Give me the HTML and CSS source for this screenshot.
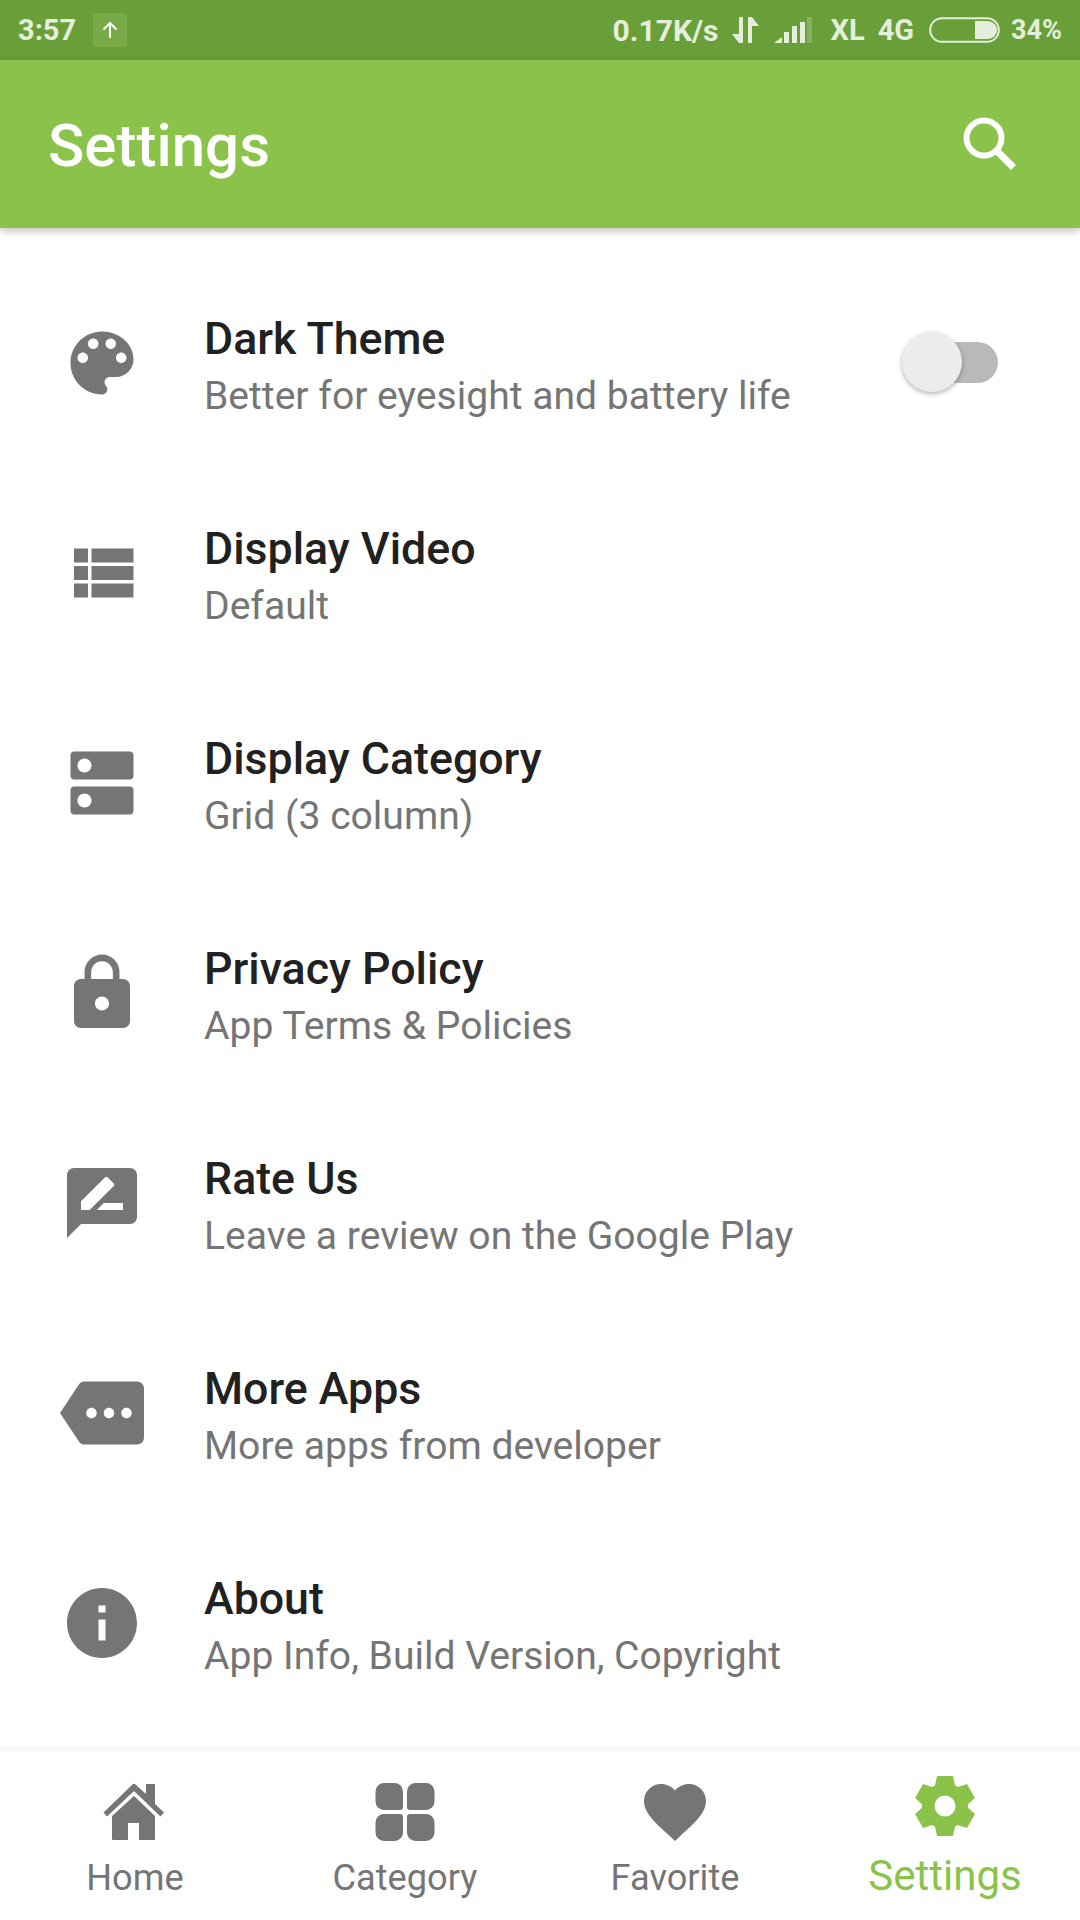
FILE: index.html
```html
<!DOCTYPE html>
<html lang="en">
<head>
  <meta charset="UTF-8">
  <meta name="viewport" content="width=device-width, initial-scale=1.0">
  <title>Settings</title>
  <link rel="stylesheet" href="styles.css">
</head>
<body>
  <!-- Status bar -->
  <div class="status-bar">
    <span class="status-time">3:57</span>
    <span class="status-badge">
      <svg width="20" height="20" viewBox="0 0 20 20"><path d="M10 18V3M3.5 9.5L10 3l6.500 6.500" fill="none" stroke="#fff" stroke-width="2"/></svg>
    </span>
    <div class="status-right">
      <span class="status-speed">0.17K/s</span>
      <svg class="status-data" width="28" height="26" viewBox="0 0 28 26"><path d="M7 0h4v26H7L0 17h7zM16 0h4l7 9h-7v17h-4z" fill="#e4eedb"/></svg>
      <svg class="status-signal" width="38" height="26" viewBox="0 0 38 26"><path d="M0 26l8-6v6zM10 15h5v11h-5zM18 9h5v17h-5zM26 5h5v21h-5z" fill="#e4eedb"/><rect x="33" y="0" width="5" height="26" fill="#e4eedb" opacity=".25"/></svg>
      <span class="status-carrier">XL</span>
      <span class="status-net">4G</span>
      <svg class="status-battery" width="71" height="26" viewBox="0 0 71 26"><rect x="1.200" y="1.200" width="68.600" height="23.600" rx="11.800" fill="none" stroke="#e4eedb" stroke-width="2"/><path d="M46 4h13a9 9 0 0 1 0 18H46z" fill="#e4eedb"/></svg>
      <span class="status-battery-text">34%</span>
    </div>
  </div>

  <!-- App bar -->
  <header class="app-bar">
    <h1>Settings</h1>
    <svg class="search-icon" width="56" height="56" viewBox="0 0 56 56"><circle cx="22" cy="22" r="17.500" fill="none" stroke="#fff" stroke-width="6"/><path d="M34 34l17.500 17.500" stroke="#fff" stroke-width="7"/></svg>
  </header>

  <!-- Settings list -->
  <main class="settings-list">
    <div class="row">
      <svg class="row-icon" viewBox="0 0 24 24"><path d="M12 3c-4.97 0-9 4.03-9 9s4.030 9 9 9c.83 0 1.500-.67 1.500-1.500 0-.39-.15-.74-.39-1.010-.23-.26-.38-.61-.38-.99 0-.83.67-1.500 1.500-1.500H16c2.760 0 5-2.240 5-5 0-4.420-4.030-8-9-8zm-5.500 9c-.83 0-1.500-.67-1.500-1.500S5.670 9 6.500 9 8 9.670 8 10.500 7.330 12 6.500 12zm3-4C8.670 8 8 7.330 8 6.500S8.670 5 9.500 5s1.500.67 1.500 1.500S10.330 8 9.500 8zm5 0c-.83 0-1.500-.67-1.500-1.500S13.670 5 14.500 5s1.500.67 1.500 1.500S15.330 8 14.500 8zm3 4c-.83 0-1.500-.67-1.500-1.500S16.670 9 17.500 9s1.500.67 1.500 1.500-.67 1.500-1.500 1.500z"/></svg>
      <div class="row-text">
        <div class="row-title">Dark Theme</div>
        <div class="row-sub">Better for eyesight and battery life</div>
      </div>
      <div class="toggle"><span class="toggle-thumb"></span></div>
    </div>
    <div class="row">
      <svg class="row-icon" viewBox="0 0 24 24"><path d="M4 14h4v-4H4v4zm0 5h4v-4H4v4zM4 9h4V5H4v4zm5 5h12v-4H9v4zm0 5h12v-4H9v4zM9 5v4h12V5H9z"/></svg>
      <div class="row-text">
        <div class="row-title">Display Video</div>
        <div class="row-sub">Default</div>
      </div>
    </div>
    <div class="row">
      <svg class="row-icon" viewBox="0 0 24 24"><path d="M20 13H4c-.55 0-1 .45-1 1v6c0 .55.45 1 1 1h16c.55 0 1-.45 1-1v-6c0-.55-.45-1-1-1zM7 19c-1.100 0-2-.9-2-2s.9-2 2-2 2 .9 2 2-.9 2-2 2zM20 3H4c-.55 0-1 .45-1 1v6c0 .55.45 1 1 1h16c.55 0 1-.45 1-1V4c0-.55-.45-1-1-1zM7 9c-1.100 0-2-.9-2-2s.9-2 2-2 2 .9 2 2-.9 2-2 2z"/></svg>
      <div class="row-text">
        <div class="row-title">Display Category</div>
        <div class="row-sub">Grid (3 column)</div>
      </div>
    </div>
    <div class="row">
      <svg class="row-icon" viewBox="0 0 24 24"><path d="M18 8h-1V6c0-2.760-2.240-5-5-5S7 3.240 7 6v2H6c-1.100 0-2 .9-2 2v10c0 1.100.9 2 2 2h12c1.100 0 2-.9 2-2V10c0-1.100-.9-2-2-2zm-6 9c-1.100 0-2-.9-2-2s.9-2 2-2 2 .9 2 2-.9 2-2 2zm3.100-9H8.900V6c0-1.710 1.390-3.100 3.100-3.100 1.710 0 3.100 1.390 3.100 3.100v2z"/></svg>
      <div class="row-text">
        <div class="row-title">Privacy Policy</div>
        <div class="row-sub">App Terms &amp; Policies</div>
      </div>
    </div>
    <div class="row">
      <svg class="row-icon" viewBox="0 0 24 24"><path d="M20 2H4c-1.100 0-1.990.9-1.990 2L2 22l4-4h14c1.100 0 2-.9 2-2V4c0-1.100-.9-2-2-2zM6 14v-2.470l6.880-6.880c.2-.2.51-.2.71 0l1.770 1.770c.2.2.2.51 0 .71L8.470 14H6zm12 0h-7.500l2-2H18v2z"/></svg>
      <div class="row-text">
        <div class="row-title">Rate Us</div>
        <div class="row-sub">Leave a review on the Google Play</div>
      </div>
    </div>
    <div class="row">
      <svg class="row-icon" viewBox="0 0 24 24"><path d="M22 3H7c-.69 0-1.230.35-1.590.88L0 12l5.410 8.110c.36.53.9.89 1.590.89h15c1.100 0 2-.9 2-2V5c0-1.100-.9-2-2-2zM9 13.500c-.83 0-1.500-.67-1.500-1.500s.67-1.500 1.500-1.500 1.500.67 1.500 1.500-.67 1.500-1.500 1.500zm5 0c-.83 0-1.500-.67-1.500-1.500s.67-1.500 1.500-1.500 1.500.67 1.500 1.500-.67 1.500-1.500 1.500zm5 0c-.83 0-1.500-.67-1.500-1.500s.67-1.500 1.500-1.500 1.500.67 1.500 1.500-.67 1.500-1.500 1.500z"/></svg>
      <div class="row-text">
        <div class="row-title">More Apps</div>
        <div class="row-sub">More apps from developer</div>
      </div>
    </div>
    <div class="row">
      <svg class="row-icon" viewBox="0 0 24 24"><path d="M12 2C6.480 2 2 6.480 2 12s4.480 10 10 10 10-4.480 10-10S17.520 2 12 2zm1 15h-2v-6h2v6zm0-8h-2V7h2v2z"/></svg>
      <div class="row-text">
        <div class="row-title">About</div>
        <div class="row-sub">App Info, Build Version, Copyright</div>
      </div>
    </div>
  </main>

  <!-- Bottom navigation -->
  <nav class="bottom-nav">
    <div class="tab">
      <svg class="tab-icon" width="64" height="60" viewBox="0 0 64 60"><path d="M30 2a2 2 0 0 1 2 0l11 10V2h9v20l9 8.500-3.500 4L31 9 4 34.500.5 30.500z"/><path d="M31 14L9 34v23a1 1 0 0 0 1 1h15V41h11v17h15a1 1 0 0 0 1-1V34z"/></svg>
      <span class="tab-label">Home</span>
    </div>
    <div class="tab">
      <svg class="tab-icon" width="64" height="60" viewBox="0 0 64 60">
        <path d="M11 1h10.500a8.500 8.500 0 0 1 8.500 8.500V25a3 3 0 0 1-3 3H11a8.500 8.500 0 0 1-8.500-8.500v-10A8.500 8.500 0 0 1 11 1z"/>
        <path transform="matrix(-1 0 0 1 64 0)" d="M11 1h10.500a8.500 8.500 0 0 1 8.500 8.500V25a3 3 0 0 1-3 3H11a8.500 8.500 0 0 1-8.500-8.500v-10A8.500 8.500 0 0 1 11 1z"/>
        <path transform="matrix(1 0 0 -1 0 60)" d="M11 1h10.500a8.500 8.500 0 0 1 8.500 8.500V25a3 3 0 0 1-3 3H11a8.500 8.500 0 0 1-8.500-8.500v-10A8.500 8.500 0 0 1 11 1z"/>
        <path transform="matrix(-1 0 0 -1 64 60)" d="M11 1h10.500a8.500 8.500 0 0 1 8.500 8.500V25a3 3 0 0 1-3 3H11a8.500 8.500 0 0 1-8.500-8.500v-10A8.500 8.500 0 0 1 11 1z"/>
      </svg>
      <span class="tab-label">Category</span>
    </div>
    <div class="tab">
      <svg class="tab-icon" width="64" height="60" viewBox="0 0 64 60"><path transform="translate(-5.200 -7.300) scale(3.100)" d="M12 21.350l-1.450-1.320C5.400 15.360 2 12.280 2 8.500 2 5.420 4.420 3 7.500 3c1.740 0 3.410.81 4.500 2.090C13.090 3.810 14.760 3 16.500 3 19.580 3 22 5.420 22 8.500c0 3.780-3.400 6.860-8.550 11.540L12 21.350z"/></svg>
      <span class="tab-label">Favorite</span>
    </div>
    <div class="tab active">
      <svg class="tab-icon" width="64" height="64" viewBox="0 0 64 64">
        <path d="M24 2h16l3 14H21z"/>
        <path d="M24 2h16l3 14H21z" transform="rotate(60 32 32)"/>
        <path d="M24 2h16l3 14H21z" transform="rotate(120 32 32)"/>
        <path d="M24 2h16l3 14H21z" transform="rotate(180 32 32)"/>
        <path d="M24 2h16l3 14H21z" transform="rotate(240 32 32)"/>
        <path d="M24 2h16l3 14H21z" transform="rotate(300 32 32)"/>
        <path fill-rule="evenodd" d="M32 9a23 23 0 1 0 0 46 23 23 0 0 0 0-46zm0 12.500a10.500 10.500 0 1 1 0 21 10.500 10.500 0 0 1 0-21z"/>
      </svg>
      <span class="tab-label">Settings</span>
    </div>
  </nav>
</body>
</html>
```

FILE: styles.css
```css
* {
  box-sizing: border-box;
}
body {
  margin: 0;
  width: 1080px;
  height: 1920px;
  display: flex;
  flex-direction: column;
  overflow: hidden;
  background-color: #fff;
  font-family: Roboto, "Liberation Sans", sans-serif;
  color: #212121;
}

/* Status bar */
.status-bar {
  height: 60px;
  flex: none;
  display: flex;
  align-items: center;
  padding: 0 18px 0 18px;
  background-color: #689f38;
  color: #e4eedb;
  font-size: 29px;
  font-weight: 700;
}
.status-badge {
  width: 34px;
  height: 34px;
  margin-left: 17px;
  display: flex;
  align-items: center;
  justify-content: center;
  border-radius: 2px;
  background-color: #78ab48;
}
.status-right {
  margin-left: auto;
  display: flex;
  align-items: center;
}
.status-speed {
  font-size: 30px;
}
.status-data {
  margin-left: 13px;
}
.status-signal {
  margin-left: 14px;
}
.status-carrier {
  margin-left: 19px;
}
.status-net {
  margin-left: 13px;
}
.status-battery {
  margin-left: 15px;
}
.status-battery-text {
  margin-left: 11px;
  font-size: 27px;
}

/* App bar */
.app-bar {
  height: 168px;
  flex: none;
  position: relative;
  display: flex;
  align-items: center;
  justify-content: space-between;
  padding: 0 62px 0 48px;
  background-color: #8bc34a;
  box-shadow: 0 3px 8px rgba(0, 0, 0, 0.25);
}
.app-bar h1 {
  margin: 0;
  padding-top: 2px;
  font-size: 60px;
  font-weight: 500;
  color: #fff;
}

/* Settings list */
.settings-list {
  flex: 1;
  padding-top: 30px;
}
.row {
  height: 210px;
  display: flex;
  align-items: center;
  padding: 0 82px 0 60px;
}
.row-icon {
  width: 84px;
  height: 84px;
  flex: none;
  fill: #757575;
}
.row-text {
  flex: 1;
  margin-left: 60px;
  padding-top: 9px;
}
.row-title {
  font-size: 44.7px;
  font-weight: 500;
  line-height: 57px;
  color: #212121;
}
.row-sub {
  font-size: 39.1px;
  line-height: 57px;
  color: #757575;
}
.toggle {
  width: 80px;
  height: 41px;
  margin-bottom: 2px;
  position: relative;
  border-radius: 21px;
  background-color: #b9b9b9;
}
.toggle-thumb {
  position: absolute;
  top: -10px;
  left: -16px;
  width: 60px;
  height: 60px;
  border-radius: 50%;
  background-color: #ececec;
  box-shadow: 0 2px 5px rgba(0, 0, 0, 0.3);
}

/* Bottom navigation */
.bottom-nav {
  height: 174px;
  flex: none;
  display: grid;
  grid-template-columns: repeat(4, 1fr);
  border-top: 6px solid #f7f7f7;
}
.tab {
  display: flex;
  flex-direction: column;
  align-items: center;
  padding-top: 30px;
  color: #757575;
}
.tab-icon {
  fill: #757575;
  flex: none;
}
.tab-label {
  margin-top: 14px;
  font-size: 36.2px;
  line-height: 44px;
}
.tab.active {
  color: #8bc34a;
  padding-top: 22px;
}
.tab.active .tab-icon {
  fill: #8bc34a;
}
.tab.active .tab-label {
  margin-top: 16px;
  font-size: 42px;
}
```
